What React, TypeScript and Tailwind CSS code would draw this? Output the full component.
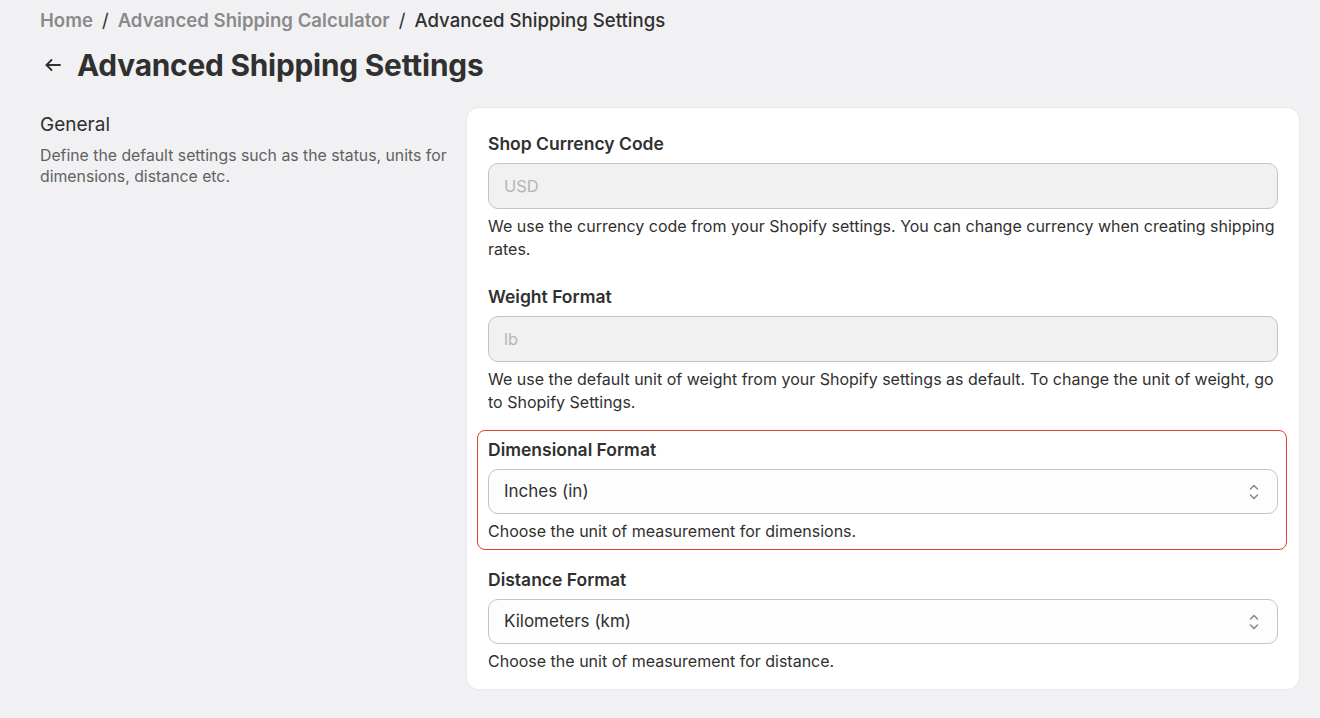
import React from "react";

const font = { fontFamily: "Inter, 'Noto Sans', sans-serif" };

function Chevrons() {
  return (
    <svg width="12" height="18" viewBox="0 0 12 18" fill="none" stroke="#8a8a8a" strokeWidth="1.6" strokeLinecap="round" strokeLinejoin="round">
      <path d="M2.5 6 L6 2.5 L9.5 6" />
      <path d="M2.5 12 L6 15.5 L9.5 12" />
    </svg>
  );
}

function Field({ label, value, help, disabled }: { label: string; value: string; help: string; disabled?: boolean }) {
  return (
    <div className="flex flex-col">
      <div className="text-[17.5px] font-semibold text-[#303030] leading-[22px] mb-[8px]">{label}</div>
      {disabled ? (
        <div className="h-[46px] rounded-[10px] border border-[#c4c4c4] bg-[#f1f1f1] px-[15px] flex items-center text-[16.5px] text-[#b5b5b5]">
          {value}
        </div>
      ) : (
        <div className="h-[45px] rounded-[10px] border border-[#c4c4c4] bg-[#fdfdfd] pl-[15px] pr-[17px] flex items-center justify-between text-[17px] text-[#303030]">
          <span>{value}</span>
          <Chevrons />
        </div>
      )}
      <div className="mt-[6px] text-[16px] leading-[23px] text-[#303030]">{help}</div>
    </div>
  );
}

export default function App() {
  return (
    <div style={font} className="w-[1320px] h-[718px] bg-[#f1f1f3] overflow-hidden">
      <div className="pl-[40px] pt-[8px]">
        <div className="flex items-center text-[18.6px] leading-[24px]">
          <span className="font-semibold text-[#8a8a8a]">Home</span>
          <span className="mx-[9px] text-[#303030]">/</span>
          <span className="font-semibold text-[#8a8a8a]">Advanced Shipping Calculator</span>
          <span className="mx-[9px] text-[#303030]">/</span>
          <span className="font-medium text-[#303030]">Advanced Shipping Settings</span>
        </div>
        <div className="flex items-center mt-[13px] h-[40px]">
          <svg width="20" height="20" viewBox="0 0 20 20" fill="none" stroke="#303030" strokeWidth="1.8" strokeLinecap="round" strokeLinejoin="round" className="ml-[3px] mr-[14px]">
            <path d="M17 10 H3.5" />
            <path d="M8.5 5 L3.5 10 L8.5 15" />
          </svg>
          <h1 className="text-[29.8px] font-bold text-[#303030] tracking-[-0.2px]">Advanced Shipping Settings</h1>
        </div>
      </div>
      <div className="flex pl-[40px] pr-[21px] mt-[23px]">
        <div className="w-[427px] pt-[5px]">
          <div className="text-[19px] text-[#303030] leading-[24px]">General</div>
          <div className="mt-[8px] text-[15.8px] leading-[21px] text-[#616161]">
            Define the default settings such as the status, units for dimensions, distance etc.
          </div>
        </div>
        <div className="flex-1 bg-white rounded-[12px] px-[21px] pt-[25px] pb-[16px] shadow-[0_0_0_1px_rgba(0,0,0,0.03)]">
          <Field
            label="Shop Currency Code"
            value="USD"
            disabled
            help="We use the currency code from your Shopify settings. You can change currency when creating shipping rates."
          />
          <div className="h-[25px]" />
          <Field
            label="Weight Format"
            value="lb"
            disabled
            help="We use the default unit of weight from your Shopify settings as default. To change the unit of weight, go to Shopify Settings."
          />
          <div className="h-[16px]" />
          <div className="-mx-[11px] -mr-[9px] border-[1.5px] border-[#e0442f] rounded-[8px] px-[10px] pr-[8px] pt-[8px] pb-[6px]">
            <Field label="Dimensional Format" value="Inches (in)" help="Choose the unit of measurement for dimensions." />
          </div>
          <div className="h-[19px]" />
          <Field label="Distance Format" value="Kilometers (km)" help="Choose the unit of measurement for distance." />
        </div>
      </div>
    </div>
  );
}
